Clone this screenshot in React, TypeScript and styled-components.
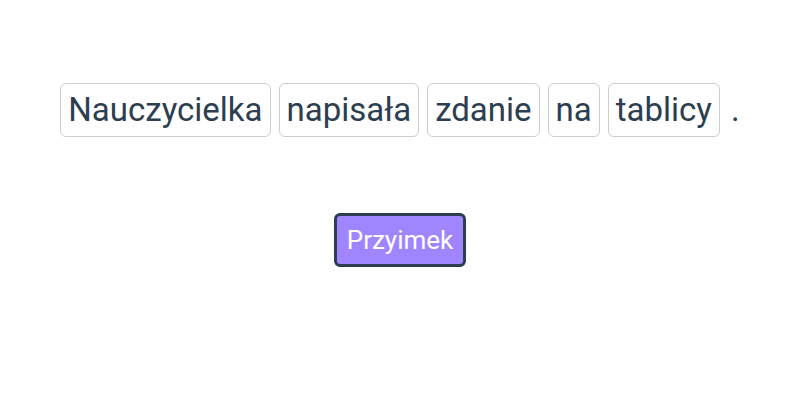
import React from 'react';
import styled, { createGlobalStyle } from 'styled-components';

const GlobalStyle = createGlobalStyle`
  body {
    margin: 0;
    background: #ffffff;
    font-family: Roboto, "Noto Sans", sans-serif;
  }
`;

const words = ['Nauczycielka', 'napisała', 'zdanie', 'na', 'tablicy'];

const App = () => {
  return (
    <>
      <GlobalStyle />
      <Page>
        <Sentence>
          {words.map((w) => (
            <Word key={w}>{w}</Word>
          ))}
          <Punct>.</Punct>
        </Sentence>
        <TagButton type="button">Przyimek</TagButton>
      </Page>
    </>
  );
};

export default App;

const Page = styled.div`
  display: flex;
  flex-direction: column;
  align-items: center;
  padding-top: 83px;
  gap: 76px;
`;

const Sentence = styled.div`
  display: flex;
  align-items: center;
  gap: 8px;
`;

const Word = styled.span`
  display: inline-block;
  padding: 4px 7px;
  border: 1px solid #c9ced3;
  border-radius: 6px;
  font-size: 33px;
  line-height: 44px;
  color: #2c3e50;
`;

const Punct = styled.span`
  font-size: 33px;
  line-height: 44px;
  color: #2c3e50;
  padding-left: 3px;
`;

const TagButton = styled.button`
  font-family: Roboto, "Noto Sans", sans-serif;
  font-size: 26px;
  line-height: 30px;
  padding: 9px 10px;
  color: #ffffff;
  background: #9f85ff;
  border: 3px solid #2c3e50;
  border-radius: 6px;
  cursor: pointer;
`;
